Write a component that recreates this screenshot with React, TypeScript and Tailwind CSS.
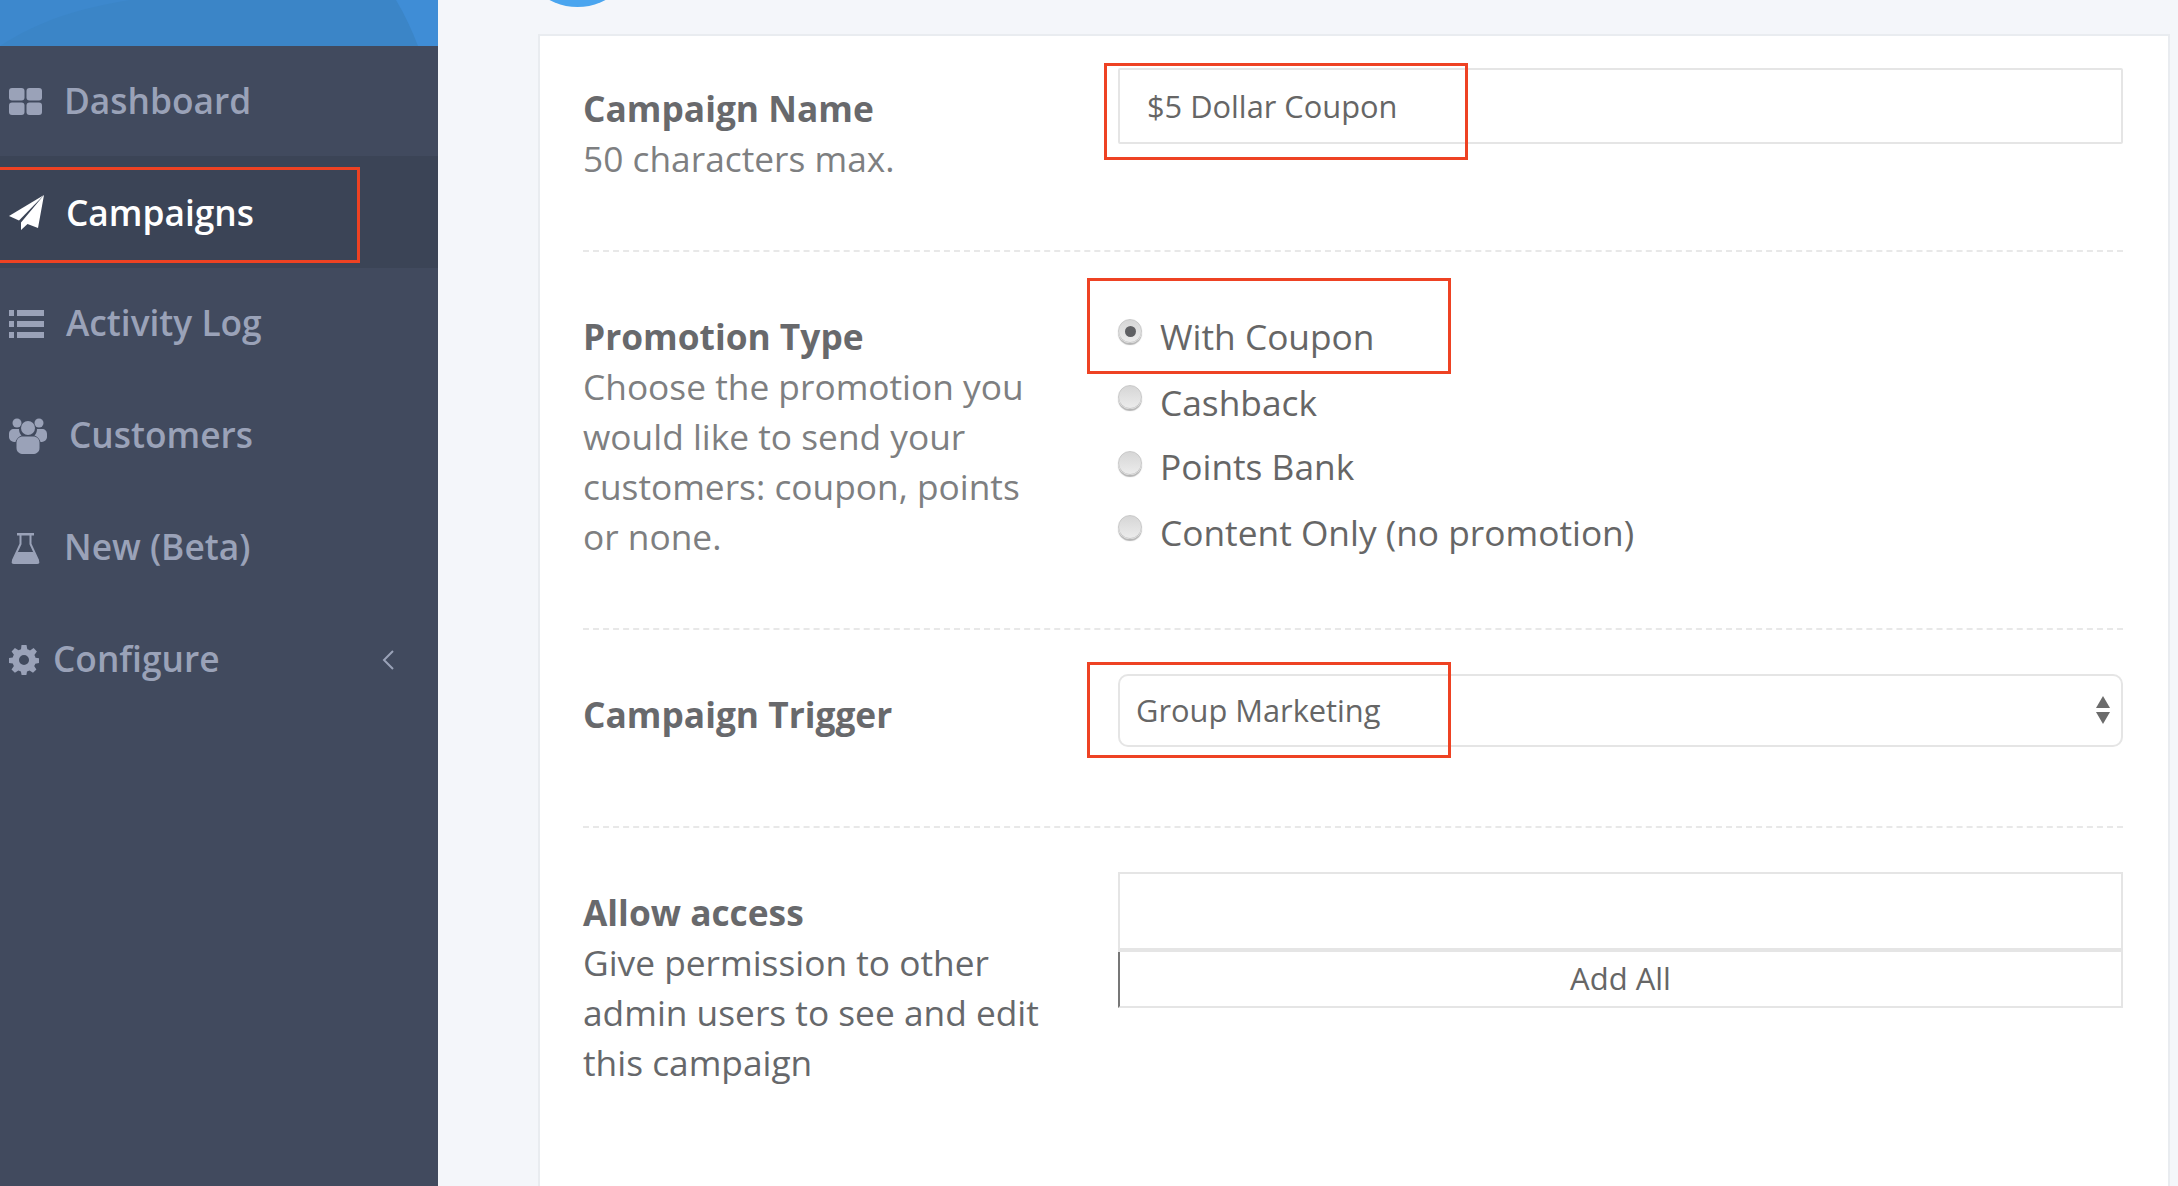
const FONT = "font-['Open_Sans',sans-serif]";

function GridIcon({ className }: { className?: string }) {
  return (
    <svg viewBox="0 0 33 27" className={className} fill="currentColor">
      <rect x="0" y="0" width="15.500" height="12.500" rx="3" />
      <rect x="17.500" y="0" width="15.500" height="12.500" rx="3" />
      <rect x="0" y="14.500" width="15.500" height="12.500" rx="3" />
      <rect x="17.500" y="14.500" width="15.500" height="12.500" rx="3" />
    </svg>
  );
}

function PlaneIcon({ className }: { className?: string }) {
  return (
    <svg viewBox="0 0 35 35" className={className} fill="currentColor">
      <path d="M35 0 L0 21 L10 25.500 Z" />
      <path d="M35 0 L12 27.500 L12 35 L18.500 29 L29 33 Z" />
    </svg>
  );
}

function ListIcon({ className }: { className?: string }) {
  return (
    <svg viewBox="0 0 35 28" className={className} fill="currentColor">
      <rect x="0" y="0" width="5" height="6" />
      <rect x="8" y="0" width="27" height="6" />
      <rect x="0" y="11" width="5" height="6" />
      <rect x="8" y="11" width="27" height="6" />
      <rect x="0" y="22" width="5" height="6" />
      <rect x="8" y="22" width="27" height="6" />
    </svg>
  );
}

function UsersIcon({ className }: { className?: string }) {
  return (
    <svg viewBox="0 0 38 36" className={className} fill="currentColor">
      <circle cx="8" cy="5" r="4.500" />
      <circle cx="30" cy="5" r="4.500" />
      <circle cx="19" cy="10" r="7" />
      <path d="M0 16 C0 13 2 11 5 11 L10 11 C10 14 11 16 12.500 17.500 C9 19 7 21.500 6.500 24 C3 24 0 22 0 19 Z" />
      <path d="M38 16 C38 13 36 11 33 11 L28 11 C28 14 27 16 25.500 17.500 C29 19 31 21.500 31.500 24 C35 24 38 22 38 19 Z" />
      <path d="M14 18.500 L24 18.500 C28 18.500 30.500 21 30.500 25 L30.500 30 C30.500 34 27 36 24 36 L14 36 C11 36 7.500 34 7.500 30 L7.500 25 C7.500 21 10 18.500 14 18.500 Z" />
    </svg>
  );
}

function FlaskIcon({ className }: { className?: string }) {
  return (
    <svg viewBox="0 0 29 31" className={className} fill="currentColor">
      <rect x="6" y="0" width="17" height="2.500" />
      <path
        d="M9.500 2 L9.500 11 L2 27 C1.500 28.500 2.500 29.500 3.500 29.500 L25.500 29.500 C26.500 29.500 27.500 28.500 27 27 L19.500 11 L19.500 2"
        fill="none"
        stroke="currentColor"
        strokeWidth="2"
      />
      <path d="M6.500 19 L22.500 19 L28 28 C29 30 28 31 26 31 L3 31 C1 31 0 30 1 28 Z" />
    </svg>
  );
}

function GearIcon({ className }: { className?: string }) {
  return (
    <svg viewBox="0 0 30 30" className={className} fill="currentColor">
      <path
        fillRule="evenodd"
        d="M12.500 0 L17.500 0 L18.300 4.200 C19.300 4.500 20.200 4.900 21 5.400 L24.600 3 L27.900 6.400 L25.400 9.900 C25.900 10.800 26.300 11.700 26.500 12.700 L30 13.300 L30 18 L26.300 18.700 C26 19.500 25.700 20.300 25.200 21 L27.400 24.500 L24 27.800 L20.500 25.500 C19.700 26 18.900 26.300 18 26.500 L17.400 30 L12.600 30 L11.900 26.400 C11 26.200 10.200 25.800 9.400 25.400 L5.900 27.800 L2.500 24.400 L4.900 21 C4.400 20.200 4.100 19.400 3.800 18.500 L0 18 L0 13 L3.700 12.400 C4 11.500 4.400 10.600 4.900 9.800 L2.600 6.400 L5.900 3 L9.500 5.300 C10.300 4.800 11.200 4.500 12 4.200 Z M15 10 A5 5 0 1 0 15.010 20 A5 5 0 1 0 15 10 Z"
      />
    </svg>
  );
}

const NAV = [
  { label: "Activity Log", Icon: ListIcon, icon: "w-[35px] h-[28px]", gap: "ml-[9px]", text: "ml-[22px]" },
  { label: "Customers", Icon: UsersIcon, icon: "w-[38px] h-[36px]", gap: "ml-[9px]", text: "ml-[22px]" },
  { label: "New (Beta)", Icon: FlaskIcon, icon: "w-[29px] h-[31px]", gap: "ml-[11px]", text: "ml-[24px]" },
];

const RADIOS = [
  { label: "With Coupon", checked: true, h: "h-[66px]", lead: "leading-[66px]" },
  { label: "Cashback", checked: false, h: "h-[66px]", lead: "leading-[66px]" },
  { label: "Points Bank", checked: false, h: "h-[64px]", lead: "leading-[62px]" },
  { label: "Content Only (no promotion)", checked: false, h: "h-[66px]", lead: "leading-[66px]" },
];

function Sidebar() {
  return (
    <aside className="w-[438px] shrink-0 bg-[#414a5e] text-[#9aa2b8] font-semibold text-[35.300px] leading-[50px]">
      <div className="relative h-[46px] overflow-hidden bg-[#3b85c7]">
        <svg viewBox="0 0 438 46" className="w-full h-full" preserveAspectRatio="none">
          <path d="M0 46 C40 20 80 8 130 0 L0 0 Z" fill="#3d88cd" />
          <path d="M396 0 C405 15 412 30 418 46 L438 46 L438 0 Z" fill="#3f8dd6" />
        </svg>
      </div>
      <div className="flex items-center h-[110px]">
        <GridIcon className="ml-[9px] w-[33px] h-[27px]" />
        <span className="ml-[22px] -mt-[2px]">Dashboard</span>
      </div>
      <div className="relative flex items-center h-[112px] bg-[#3b4456] text-white">
        <PlaneIcon className="ml-[9px] w-[35px] h-[35px]" />
        <span className="ml-[22px]">Campaigns</span>
        <div className="absolute -left-[3px] top-[11px] w-[363px] h-[96px] border-[3px] border-[#ee4223]" />
      </div>
      {NAV.map(({ label, Icon, icon, gap, text }) => (
        <div key={label} className="flex items-center h-[112px]">
          <Icon className={`${gap} ${icon}`} />
          <span className={`${text} -mt-[4px]`}>{label}</span>
        </div>
      ))}
      <div className="flex items-center h-[112px]">
        <GearIcon className="ml-[9px] w-[30px] h-[30px]" />
        <span className="ml-[14px] -mt-[4px]">Configure</span>
        <svg viewBox="0 0 12 20" className="ml-auto mr-[44px] w-[12px] h-[20px]" fill="none" stroke="currentColor" strokeWidth="2">
          <path d="M11 1 L2 10 L11 19" />
        </svg>
      </div>
    </aside>
  );
}

function Label({ title, desc, light }: { title: string; desc?: string; light?: boolean }) {
  return (
    <div className="w-[470px] mr-[65px] shrink-0 text-[35.300px] leading-[50px]">
      <div className="font-bold text-[#68696c]">{title}</div>
      {desc && <div className={light ? "text-[#7e7f81]" : "text-[#66686b]"}>{desc}</div>}
    </div>
  );
}

function RedBox({ className }: { className: string }) {
  return <div className={`absolute border-[3px] border-[#ee4223] pointer-events-none ${className}`} />;
}

function Form() {
  return (
    <div className="mt-[34px] ml-[100px] mr-[8px] border-2 border-[#e9ecf0] border-b-0 bg-white pl-[43px] pr-[45px] h-[1200px]">
      <div className="flex h-[216px] border-b-2 border-dashed border-[#e8e8e8]">
        <div className="pt-[47px]">
          <Label title="Campaign Name" desc="50 characters max." light />
        </div>
        <div className="relative flex-1 pt-[32px] h-fit">
          <input
            readOnly
            value="$5 Dollar Coupon"
            className="w-full h-[76px] border-2 border-[#e5e5e5] rounded-[2px] px-[27px] text-[30.800px] text-[#666] outline-none"
          />
          <RedBox className="-left-[14px] top-[27px] w-[364px] h-[97px]" />
        </div>
      </div>

      <div className="flex h-[378px] border-b-2 border-dashed border-[#e8e8e8]">
        <div className="pt-[59px]">
          <Label
            title="Promotion Type"
            desc="Choose the promotion you would like to send your customers: coupon, points or none."
            light
          />
        </div>
        <div className="relative flex-1 pt-[51px] text-[35.300px] text-[#666]">
          {RADIOS.map((r) => (
            <div key={r.label} className={`flex ${r.h}`}>
              <span className="mt-[16px] flex items-center justify-center w-[24px] h-[24px] rounded-full border border-[#c9c9c9] bg-gradient-to-b from-[#d6d6d6] to-[#ececec] shadow-[0_2px_1px_#b5b5b5]">
                {r.checked && <span className="w-[11px] h-[11px] rounded-full bg-[#5f6063]" />}
              </span>
              <span className={`ml-[18px] ${r.lead}`}>{r.label}</span>
            </div>
          ))}
          <RedBox className="-left-[31px] top-[26px] w-[364px] h-[96px]" />
        </div>
      </div>

      <div className="flex h-[198px] border-b-2 border-dashed border-[#e8e8e8]">
        <div className="pt-[59px]">
          <Label title="Campaign Trigger" />
        </div>
        <div className="relative flex-1 pt-[44px] h-fit">
          <select className="appearance-none w-full h-[73px] border-2 border-[#e5e5e5] rounded-[10px] bg-white px-[16px] text-[30.800px] text-[#666] outline-none">
            <option>Group Marketing</option>
          </select>
          <svg viewBox="0 0 14 28" className="absolute right-[13px] top-[66px] w-[14px] h-[28px]" fill="#6b6b6b">
            <path d="M7 0 L14 12 L0 12 Z" />
            <path d="M0 16 L14 16 L7 28 Z" />
          </svg>
          <RedBox className="-left-[31px] top-[32px] w-[364px] h-[96px]" />
        </div>
      </div>

      <div className="flex">
        <div className="pt-[59px]">
          <Label title="Allow access" desc="Give permission to other admin users to see and edit this campaign" />
        </div>
        <div className="flex-1 pt-[44px]">
          <div className="h-[76px] border-2 border-b-0 border-[#e5e5e5]" />
          <div className="h-[4px] bg-[#e5e5e5]" />
          <button className="block w-full h-[56px] pb-[2px] border-2 border-t-0 border-[#e5e5e5] border-l-[#777] text-[31px] text-[#666] bg-white">
            Add All
          </button>
        </div>
      </div>
    </div>
  );
}

export default function App() {
  return (
    <div className={`flex h-screen overflow-hidden bg-[#f4f6fa] ${FONT}`}>
      <Sidebar />
      <main className="relative flex-1 min-w-0">
        <div className="absolute left-[80px] -top-[112px] w-[119px] h-[119px] rounded-full bg-[#4aa5ef]" />
        <Form />
      </main>
    </div>
  );
}
